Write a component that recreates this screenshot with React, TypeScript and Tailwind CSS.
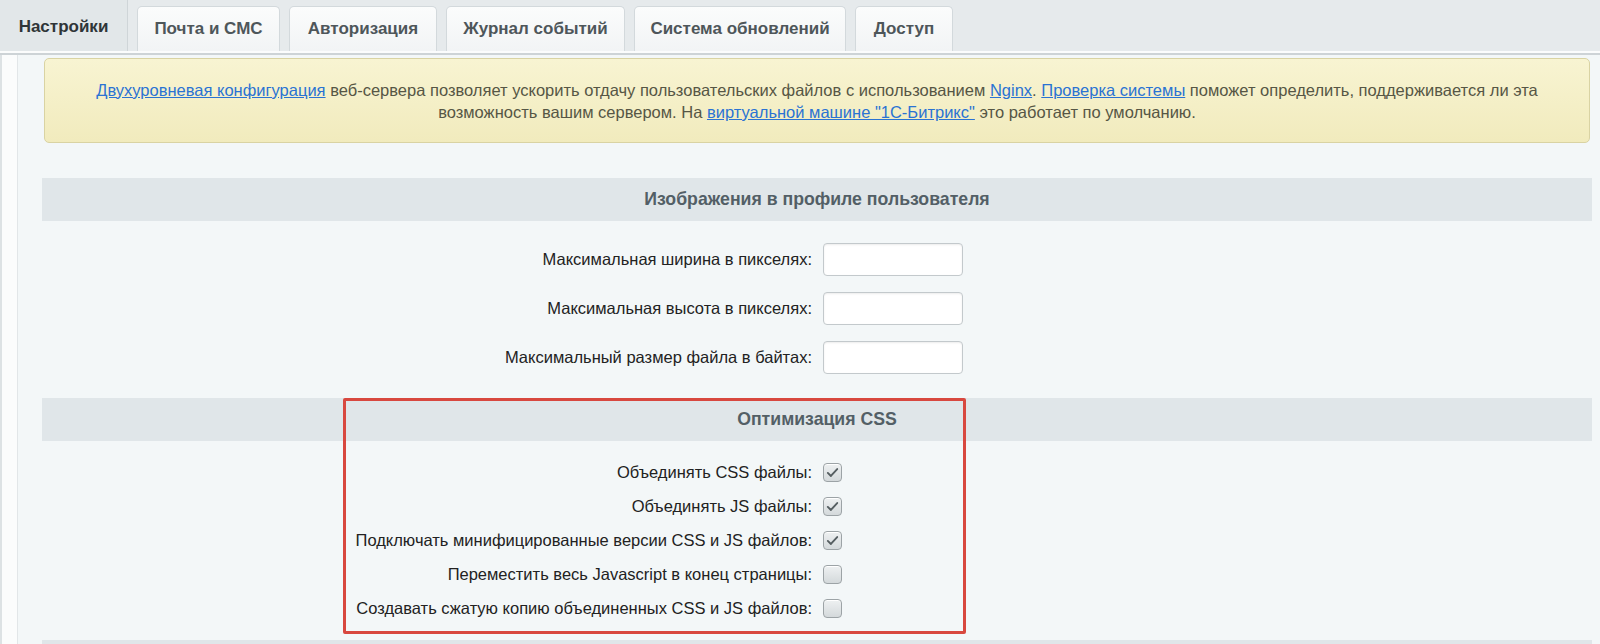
import React from 'react';

const tabs = [
  { name: 'Почта и СМС', w: 'w-[143px]' },
  { name: 'Авторизация', w: 'w-[148px]' },
  { name: 'Журнал событий', w: 'w-[179px]' },
  { name: 'Система обновлений', w: 'w-[212px]' },
  { name: 'Доступ', w: 'w-[98px]' },
];

const sizeFields = [
  'Максимальная ширина в пикселях:',
  'Максимальная высота в пикселях:',
  'Максимальный размер файла в байтах:',
];

const cssOptions = [
  { label: 'Объединять CSS файлы:', checked: true },
  { label: 'Объединять JS файлы:', checked: true },
  { label: 'Подключать минифицированные версии CSS и JS файлов:', checked: true },
  { label: 'Переместить весь Javascript в конец страницы:', checked: false },
  { label: 'Создавать сжатую копию объединенных CSS и JS файлов:', checked: false },
];

function Checkbox({ checked }: { checked: boolean }) {
  return (
    <span className="w-[19px] h-[19px] rounded-[4px] border border-[#9ca3a6] bg-linear-to-b from-[#eef1f2] to-[#d4d9db] shadow-[inset_0_1px_0_#fff] flex items-center justify-center">
      {checked && (
        <svg width="15" height="15" viewBox="0 0 16 16" fill="none">
          <path d="M3 8.4 L6.3 11.7 L13 4.3" stroke="#555e61" strokeWidth="2" strokeLinecap="round" strokeLinejoin="round" />
        </svg>
      )}
    </span>
  );
}

function SectionHeader({ title }: { title: string }) {
  return (
    <div className="h-[43px] bg-[#e0e6e9] flex items-center justify-center text-[17.7px] font-bold text-[#535f66]">
      {title}
    </div>
  );
}

export default function App() {
  return (
    <div className="w-[1600px] h-[644px] overflow-hidden bg-[#f3f7f8] font-['Liberation_Sans',Arial,sans-serif] text-[16.5px] text-[#222]">
      {/* Tabs */}
      <div className="h-[51px] bg-[#e6eaec] flex items-end gap-[9px] text-[17px]">
        <div className="w-[128px] h-[51px] bg-[#e2e7e9] border-r border-[#cfd5d8] flex items-center justify-center pt-[2px] font-bold text-[#2f3538]">
          Настройки
        </div>
        {tabs.map((t) => (
          <div
            key={t.name}
            className={`${t.w} h-[45px] bg-linear-to-b from-[#fbfcfc] to-[#f2f4f5] border border-b-0 border-[#d3d9dc] rounded-t-[5px] flex items-center justify-center font-bold text-[#4e565a]`}
          >
            {t.name}
          </div>
        ))}
      </div>
      <div className="h-[2px] bg-[#fbfcfc]" />
      <div className="h-[2px] bg-[#cdd3d6]" />

      <div className="flex h-[589px]">
        {/* Left strip */}
        <div className="w-[18px] border-l-2 border-[#dde2e4] bg-[#fbfcfc] border-r border-r-[#e2e6e8]" />

        <div className="flex-1 pl-[24px] pr-[8px] pt-[3px]">
          {/* Notice */}
          <div className="mx-[2px] h-[85px] rounded-[5px] border border-[#d9d3a3] bg-linear-to-b from-[#f8f4d2] to-[#f1ebbd] flex items-center justify-center text-center leading-[22px] text-[#565645]">
            <p>
              <a className="text-[#2a73d3] underline">Двухуровневая конфигурация</a> веб-сервера позволяет ускорить отдачу пользовательских файлов с использованием{' '}
              <a className="text-[#2a73d3] underline">Nginx</a>. <a className="text-[#2a73d3] underline">Проверка системы</a> поможет определить, поддерживается ли эта
              <br />
              возможность вашим сервером. На <a className="text-[#2a73d3] underline">виртуальной машине "1С-Битрикс"</a> это работает по умолчанию.
            </p>
          </div>

          {/* Images in profile */}
          <div className="mt-[35px]">
            <SectionHeader title="Изображения в профиле пользователя" />
            <div className="pt-[14px] pb-[16px]">
              {sizeFields.map((label) => (
                <div key={label} className="grid grid-cols-2 h-[49px] items-center">
                  <div className="text-right pr-[5px]">{label}</div>
                  <div className="pl-[6px]">
                    <input
                      type="text"
                      className="w-[140px] h-[33px] bg-white border border-[#c3c9cc] rounded-[4px] shadow-[inset_0_1px_2px_rgba(0,0,0,0.08)] outline-none"
                    />
                  </div>
                </div>
              ))}
            </div>
          </div>

          {/* CSS optimization */}
          <div className="relative">
            <SectionHeader title="Оптимизация CSS" />
            <div className="pt-[14px]">
              {cssOptions.map((o) => (
                <div key={o.label} className="grid grid-cols-2 h-[34px] items-center">
                  <div className="text-right pr-[5px]">{o.label}</div>
                  <div className="pl-[6px]">
                    <Checkbox checked={o.checked} />
                  </div>
                </div>
              ))}
            </div>
            <div className="mt-[15px] h-[43px] bg-[#e0e6e9]" />
            {/* highlight annotation */}
            <div className="absolute left-[301px] top-0 w-[623px] h-[236px] border-[3px] border-[#d8483f] rounded-[2px] pointer-events-none" />
          </div>
        </div>
      </div>
    </div>
  );
}
